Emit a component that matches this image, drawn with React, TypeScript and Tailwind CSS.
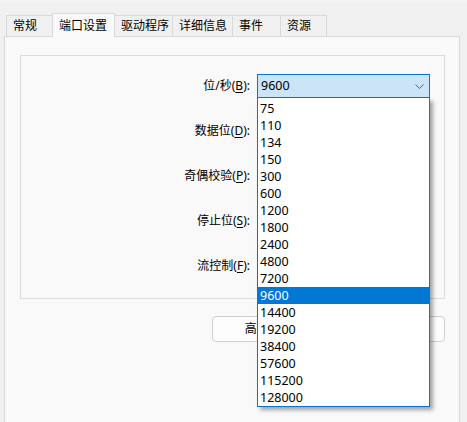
import React from "react";

const tabs = [
  { label: "常规", w: "w-[47px]", selected: false },
  { label: "端口设置", w: "w-[63px]", selected: true },
  { label: "驱动程序", w: "w-[59px]", selected: false },
  { label: "详细信息", w: "w-[61px]", selected: false },
  { label: "事件", w: "w-[49px]", selected: false },
  { label: "资源", w: "w-[47px]", selected: false },
];

const rates = [
  "75", "110", "134", "150", "300", "600", "1200", "1800", "2400", "4800",
  "7200", "9600", "14400", "19200", "38400", "57600", "115200", "128000",
];

function Label({ text, k, rest }: { text: string; k: string; rest?: string }) {
  return (
    <span>
      {text}(<u className="underline-offset-2">{k}</u>):{rest}
    </span>
  );
}

function Chevron() {
  return (
    <svg width="9" height="5" viewBox="0 0 9 5" className="shrink-0">
      <path d="M0.5 0.5 L4.5 4.5 L8.5 0.5" fill="none" stroke="#606060" strokeWidth="1" />
    </svg>
  );
}

export default function App() {
  const rows = [
    { t: "位/秒", k: "B" },
    { t: "数据位", k: "D" },
    { t: "奇偶校验", k: "P" },
    { t: "停止位", k: "S" },
    { t: "流控制", k: "F" },
  ];
  return (
    <div
      className="w-[467px] h-[422px] bg-[#f0f0f0] overflow-hidden relative text-[12px] text-black"
      style={{ fontFamily: '"Noto Sans", "Noto Sans CJK SC", sans-serif' }}
    >
      <div className="h-[4px] bg-gradient-to-b from-[#f3f6fa] to-[#f0f0f0]" />
      {/* tab strip */}
      <div className="h-[32px] flex items-end pl-[6px]">
        {tabs.map((t, i) => (
          <div
            key={t.label}
            className={
              (t.selected
                ? "h-[24px] -mb-px bg-[#f9f9f9] relative z-10 pt-[2px] "
                : "h-[21px] bg-[#f0f0f0] ") +
              (i > 0 ? "-ml-px " : "") +
              t.w +
              " border border-b-0 border-[#d9d9d9] pl-[6px] leading-[19px] whitespace-nowrap"
            }
          >
            {t.label}
          </div>
        ))}
      </div>
      {/* panel */}
      <div className="ml-[4px] w-[456px] h-[400px] border border-[#d9d9d9] bg-[#f9f9f9] pt-[18px]">
        <div className="ml-[15px] w-[425px] h-[244px] border border-[#dcdcdc] pt-[18px]">
          <div className="flex flex-col gap-[21px]">
            {rows.map((r, i) => (
              <div key={r.k} className="flex items-center h-[24px]">
                <div className="w-[230px] text-right leading-[24px] pr-[1px]">
                  <Label text={r.t} k={r.k} />
                </div>
                <div className="ml-[6px] w-[173px] h-[24px] relative">
                  {i === 0 ? (
                    <>
                      <div className="h-[24px] border border-[#0078d4] bg-[#cce4f7] flex items-center pl-[3px] pr-[5px]">
                        <span className="flex-1 leading-[22px] text-[12.5px]">9600</span>
                        <Chevron />
                      </div>
                      <div className="absolute left-0 top-full w-[173px] z-30 bg-white border border-t-0 border-[#0078d4] pt-[2px] shadow-[3px_3px_4px_rgba(0,0,0,0.35)]">
                        {rates.map((v) => (
                          <div
                            key={v}
                            className={
                              "h-[17px] leading-[17px] pl-[2px] text-[12.5px] " +
                              (v === "9600" ? "bg-[#0078d4] text-white" : "text-black")
                            }
                          >
                            {v}
                          </div>
                        ))}
                      </div>
                    </>
                  ) : (
                    <div className="h-[24px] border border-[#d0d0d0] bg-white" />
                  )}
                </div>
              </div>
            ))}
          </div>
        </div>
        <div className="ml-[15px] w-[425px] mt-[17px] flex justify-end gap-[5px]">
          <button className="w-[114px] h-[26px] rounded-[4px] border border-[#d0d0d0] bg-[#fdfdfd] leading-[24px]">
            高级(<u>A</u>)...
          </button>
          <button className="w-[114px] h-[26px] rounded-[4px] border border-[#d0d0d0] bg-[#fdfdfd] leading-[24px]">
            还原默认值(<u>R</u>)
          </button>
        </div>
      </div>
    </div>
  );
}
